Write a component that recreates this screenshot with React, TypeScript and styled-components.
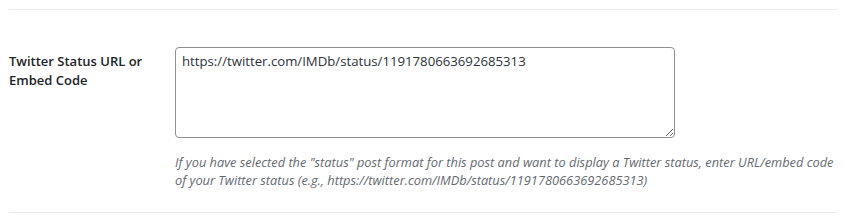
import React from 'react'
import styled, { createGlobalStyle } from 'styled-components'

const GlobalStyle = createGlobalStyle`
  html, body {
    margin: 0;
    padding: 0;
    background: #ffffff;
  }
  body {
    font-family: "Open Sans", "Noto Sans", "Liberation Sans", sans-serif;
    font-size: 13px;
    color: #1d2327;
  }
`

const Section = styled.div`
  width: 828px;
  margin: 9px 0 0 9px;
  border-top: 1px solid #ebebeb;
  border-bottom: 1px solid #ebebeb;
  box-sizing: border-box;
`

const FieldRow = styled.div`
  display: flex;
  align-items: flex-start;
  padding: 37px 0 23px;
`

const Label = styled.label`
  flex: 0 0 166px;
  padding-top: 5px;
  font-size: 13px;
  font-weight: 600;
  line-height: 19px;
  color: #1d2327;
`

const Field = styled.div`
  flex: 1;
  display: flex;
  flex-direction: column;
`

const TextArea = styled.textarea`
  width: 500px;
  height: 91px;
  box-sizing: border-box;
  padding: 4px 6px;
  border: 1px solid #8c8f94;
  border-radius: 4px;
  font-family: inherit;
  font-size: 13.2px;
  line-height: 19px;
  color: #2c3338;
  resize: vertical;
  outline: none;
`

const Description = styled.p`
  margin: 15px 0 0;
  font-size: 12.8px;
  font-style: italic;
  line-height: 18px;
  color: #646970;
`

export default function App() {
  return (
    <>
      <GlobalStyle />
      <Section>
        <FieldRow>
          <Label htmlFor="twitter-status">
            Twitter Status URL or
            <br />
            Embed Code
          </Label>
          <Field>
            <TextArea
              id="twitter-status"
              defaultValue="https://twitter.com/IMDb/status/1191780663692685313"
            />
            <Description>
              If you have selected the "status" post format for this post and want to display a Twitter status, enter URL/embed code
              <br />
              of your Twitter status (e.g., https://twitter.com/IMDb/status/1191780663692685313)
            </Description>
          </Field>
        </FieldRow>
      </Section>
    </>
  )
}
